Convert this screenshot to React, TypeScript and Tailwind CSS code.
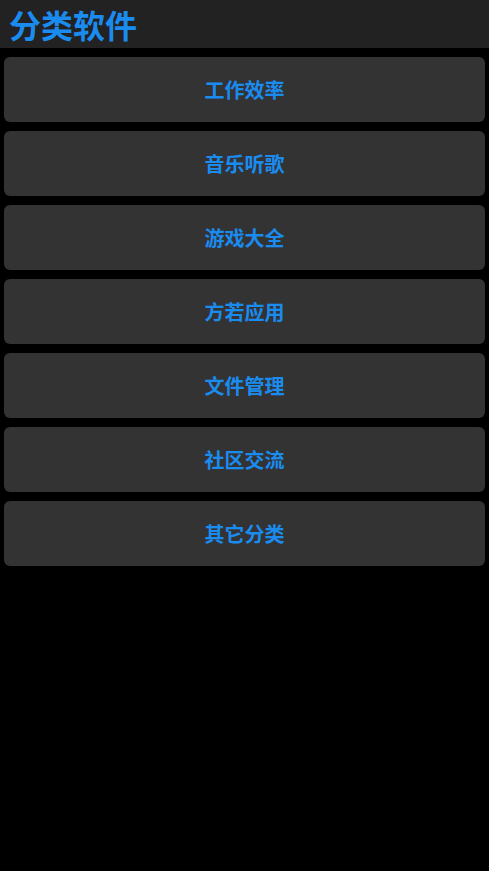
import React from 'react';

const categories = ['工作效率', '音乐听歌', '游戏大全', '方若应用', '文件管理', '社区交流', '其它分类'];

export default function App() {
  return (
    <div className="min-h-screen bg-black font-['Noto_Sans_CJK_SC',sans-serif]">
      {/* Header */}
      <header className="h-[48px] bg-[#222222] flex items-center px-[9px]">
        <h1 className="text-[32px] font-bold text-[#1a8cf0] leading-none">分类软件</h1>
      </header>

      {/* Category list */}
      <div className="flex flex-col gap-[9px] px-[4px] pt-[9px]">
        {categories.map((name) => (
          <button
            key={name}
            className="h-[65px] w-full rounded-[6px] bg-[#333333] flex items-center justify-center text-[20px] font-bold text-[#1a8cf0]"
          >
            {name}
          </button>
        ))}
      </div>
    </div>
  );
}
